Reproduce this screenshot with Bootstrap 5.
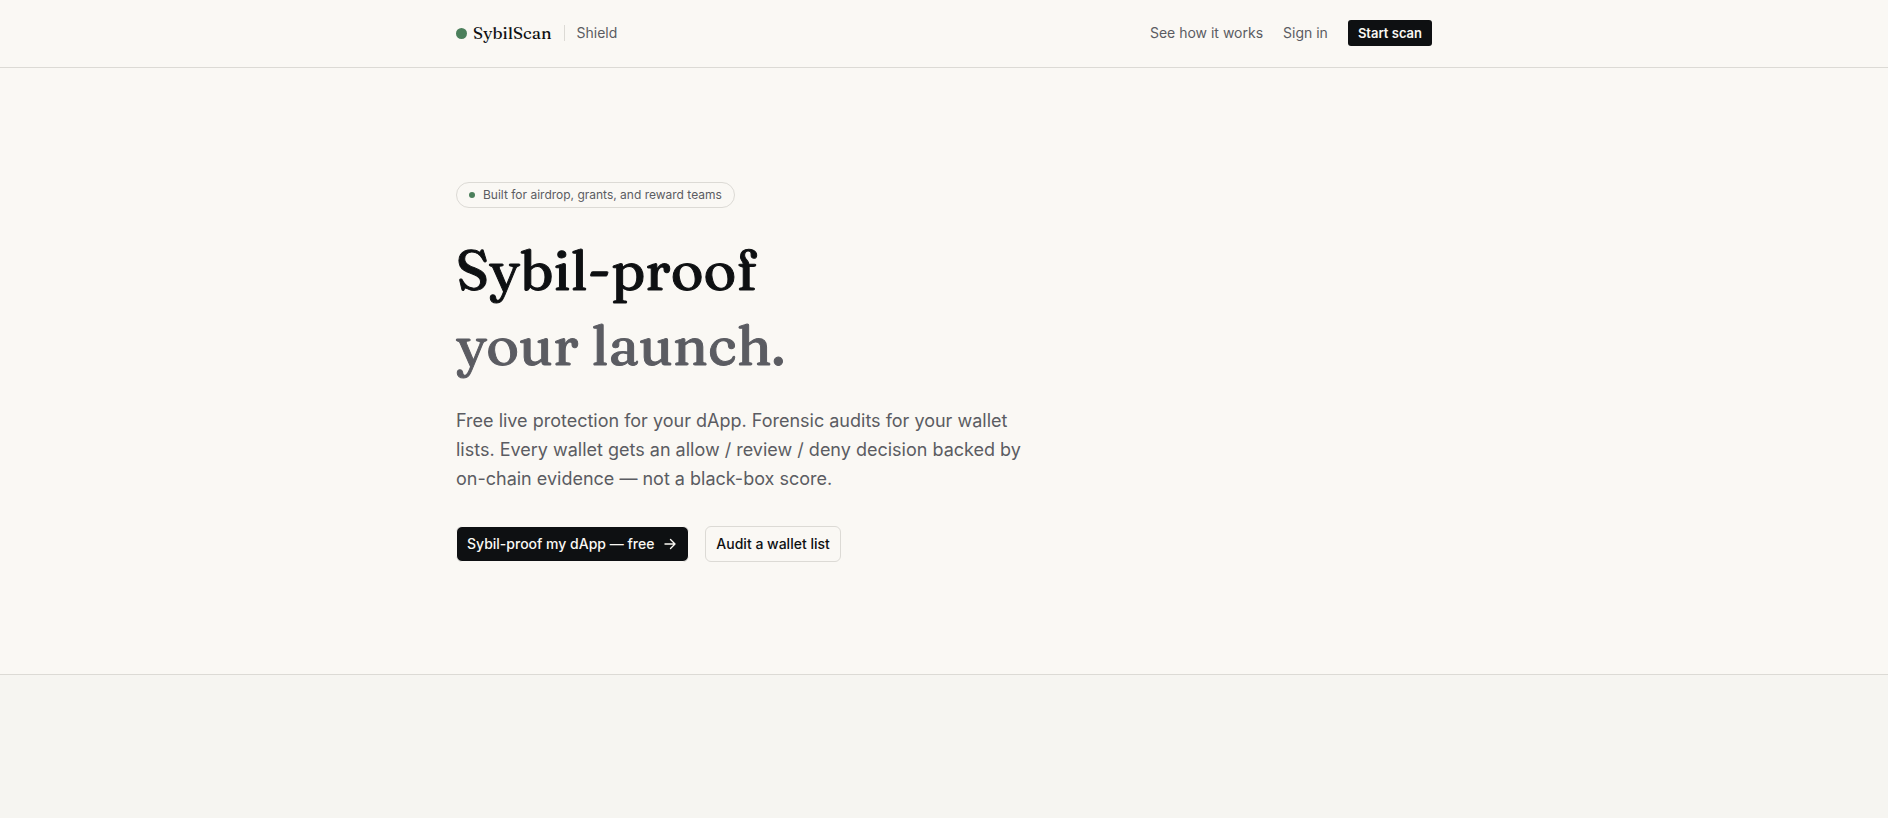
<!DOCTYPE html>
<html lang="en">
<head>
<meta charset="utf-8">
<meta name="viewport" content="width=device-width, initial-scale=1">
<title>SybilScan Shield</title>
<link href="https://cdn.jsdelivr.net/npm/bootstrap@5.3.0/dist/css/bootstrap.min.css" rel="stylesheet">
<style>
  :root { --ink: #0e1012; --muted: #5b5c62; --line: #dcdad5; --paper: #faf8f4; --green: #4b7f5b; }
  body { font-family: Inter, "Liberation Sans", sans-serif; background: #f6f5f1; color: var(--ink); font-size: 14px; line-height: 20px; }
  .site-header, .hero { background: var(--paper); border-bottom: 1px solid var(--line); }
  .site-header { padding: 20px 0 21px; }
  .wrap { max-width: 1024px; padding: 0 24px; }
  .serif { font-family: Fraunces, "Liberation Serif", serif; font-variation-settings: "opsz" 144; }
  .dot { width: 11px; height: 11px; border-radius: 50%; background: var(--green); }
  .dot-sm { width: 6px; height: 6px; }
  .brand-name { font-size: 17px; line-height: 26px; font-weight: 500; color: var(--ink); margin-left: 6px; }
  .rule { width: 1px; height: 16px; background: var(--line); margin: 0 12px; }
  .quiet { color: var(--muted); }
  .nav-gap { gap: 20px; }
  .btn { font-weight: 500; font-size: 14px; line-height: 20px; }
  .btn-ink { background: var(--ink); color: var(--paper); border: 1px solid var(--paper); }
  .btn-ink:hover { background: #2a2c30; color: var(--paper); }
  .btn-start { font-size: 13px; font-weight: 600; line-height: 18px; padding: 4px 10px; border: 0; border-radius: 3px; }
  .btn-hero { padding: 7px 10px; border-radius: 6px; }
  .btn-line { border: 1px solid var(--line); color: var(--ink); }
  .hero { padding: 114px 0 112px; }
  .pill { border: 1px solid var(--line); font-size: 12px; line-height: 16px; padding: 4px 12px; gap: 8px; }
  h1 { font-size: 56px; line-height: 75px; font-weight: 500; margin: 24px 0; -webkit-text-stroke: 1px; }
  .intro { font-size: 18px; line-height: 29px; max-width: 576px; margin-bottom: 33px; }
</style>
</head>
<body>
<header class="site-header">
  <div class="wrap container-fluid d-flex align-items-center justify-content-between">
    <div class="d-flex align-items-center">
      <a href="#" class="d-flex align-items-center text-decoration-none"><span class="dot"></span><span class="serif brand-name">SybilScan</span></a>
      <span class="rule"></span>
      <span class="quiet">Shield</span>
    </div>
    <nav class="d-flex align-items-center nav-gap">
      <a href="#how" class="quiet text-decoration-none">See how it works</a>
      <a href="#signin" class="quiet text-decoration-none">Sign in</a>
      <button type="button" class="btn btn-ink btn-start">Start scan</button>
    </nav>
  </div>
</header>
<main>
  <section class="hero">
    <div class="wrap container-fluid">
      <div class="pill quiet rounded-pill d-inline-flex align-items-center"><span class="dot dot-sm"></span>Built for airdrop, grants, and reward teams</div>
      <h1 class="serif">Sybil-proof<br><span class="quiet">your launch.</span></h1>
      <p class="intro quiet">Free live protection for your dApp. Forensic audits for your wallet lists. Every wallet gets an allow / review / deny decision backed by on-chain evidence — not a black-box score.</p>
      <div class="d-flex flex-wrap gap-3">
        <button type="button" class="btn btn-ink btn-hero d-inline-flex align-items-center gap-2">Sybil-proof my dApp — free
          <svg width="16" height="16" viewBox="0 0 16 16" fill="none" stroke="currentColor" stroke-width="1.4" stroke-linecap="round" stroke-linejoin="round" aria-hidden="true"><path d="M3 8h10M8.500 3.500 13 8l-4.500 4.500"/></svg>
        </button>
        <button type="button" class="btn btn-line btn-hero">Audit a wallet list</button>
      </div>
    </div>
  </section>
</main>
<script src="https://cdn.jsdelivr.net/npm/bootstrap@5.3.0/dist/js/bootstrap.bundle.min.js"></script>
</body>
</html>
